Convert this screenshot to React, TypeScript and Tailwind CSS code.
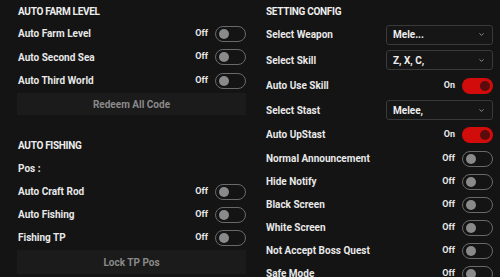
import { ChevronDown } from "lucide-react";

const font = { fontFamily: "Roboto, 'Noto Sans', sans-serif" };

const Toggle = ({ on }: { on?: boolean }) =>
  on ? (
    <div className="flex h-[16px] w-[31px] items-center justify-end rounded-full bg-[#d20b0b] pr-[3px]">
      <div className="h-[10px] w-[10px] rounded-full bg-[#5a0b0b]" />
    </div>
  ) : (
    <div className="flex h-[16px] w-[31px] items-center rounded-full border border-[#6a6a6a] bg-[#141414] pl-[3px]">
      <div className="h-[10px] w-[10px] rounded-full bg-[#8a8a8a]" />
    </div>
  );

const ToggleRow = ({ label, on, h = "h-[23px]" }: { label: string; on?: boolean; h?: string }) => (
  <div className={`flex ${h} items-center justify-between`}>
    <span className="text-[10px] font-bold text-[#e8e8e8]">{label}</span>
    <div className="flex items-center gap-[7px]">
      <span className="text-[9px] font-bold text-[#e8e8e8]">{on ? "On" : "Off"}</span>
      <Toggle on={on} />
    </div>
  </div>
);

const SelectRow = ({ label, value, h }: { label: string; value: string; h: string }) => (
  <div className={`flex ${h} items-center justify-between`}>
    <span className="text-[10px] font-bold text-[#e8e8e8]">{label}</span>
    <div className="flex h-[20px] w-[107px] items-center justify-between rounded-[3px] border border-[#3a3a3a] bg-[#161616] pl-[6px] pr-[7px]">
      <span className="text-[10px] font-bold text-[#eeeeee]">{value}</span>
      <ChevronDown className="h-[7px] w-[7px] text-[#9a9a9a]" strokeWidth={3} />
    </div>
  </div>
);

const Header = ({ text, h }: { text: string; h: string }) => (
  <div className={`flex ${h} items-center text-[10px] font-bold uppercase tracking-[-0.3px] text-[#eeeeee]`}>
    {text}
  </div>
);

const Button = ({ text, cls }: { text: string; cls: string }) => (
  <div className={`flex items-center justify-center bg-[#1b1b1b] text-[10px] font-bold text-[#8a8a8a] ${cls}`}>
    {text}
  </div>
);

export default function App() {
  return (
    <div style={font} className="h-[277px] w-[500px] overflow-hidden bg-[#141414]">
      <div className="grid grid-cols-[228px_227px] gap-x-[20px] pl-[18px] pr-[7px]">
        <div className="flex flex-col">
          <Header text="Auto Farm Level" h="h-[22px]" />
          <ToggleRow label="Auto Farm Level" />
          <ToggleRow label="Auto Second Sea" h="h-[24px]" />
          <ToggleRow label="Auto Third World" />
          <Button text="Redeem All Code" cls="mt-[1px] h-[22px] -ml-[1px]" />
          <Header text="Auto Fishing" h="mt-[19px] h-[23px]" />
          <div className="flex h-[23px] items-center text-[10px] font-bold text-[#e8e8e8]">Pos :</div>
          <ToggleRow label="Auto Craft Rod" />
          <ToggleRow label="Auto Fishing" />
          <ToggleRow label="Fishing TP" />
          <Button text="Lock TP Pos" cls="mt-[1px] h-[24px] -ml-[1px]" />
        </div>
        <div className="flex flex-col">
          <Header text="Setting Config" h="h-[22px]" />
          <SelectRow label="Select Weapon" value="Mele..." h="h-[25px]" />
          <SelectRow label="Select Skill" value="Z, X, C," h="h-[26px]" />
          <ToggleRow label="Auto Use Skill" on h="h-[25px]" />
          <SelectRow label="Select Stast" value="Melee," h="h-[24px]" />
          <ToggleRow label="Auto UpStast" on h="h-[25px]" />
          <ToggleRow label="Normal Announcement" />
          <ToggleRow label="Hide Notify" />
          <ToggleRow label="Black Screen" />
          <ToggleRow label="White Screen" />
          <ToggleRow label="Not Accept Boss Quest" />
          <ToggleRow label="Safe Mode" />
        </div>
      </div>
    </div>
  );
}
